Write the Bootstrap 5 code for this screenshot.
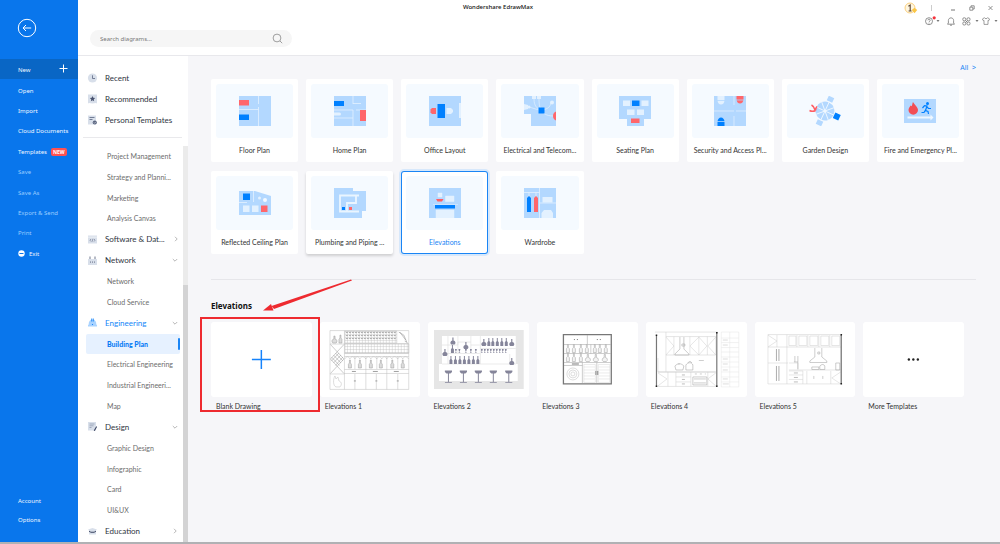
<!DOCTYPE html>
<html lang="en">
<head>
<meta charset="utf-8">
<meta name="viewport" content="width=device-width, initial-scale=1">
<title>Wondershare EdrawMax</title>
<link href="https://cdn.jsdelivr.net/npm/bootstrap@5.3.0/dist/css/bootstrap.min.css" rel="stylesheet">
<style>
  body { font: 7px/10px Lato, "Open Sans", sans-serif; color: #333; background: #f6f6f9; }
  a { color: inherit; text-decoration: none; }
  svg { display: block; flex: none; }
  .app { min-height: 100vh; border-bottom: 2px solid #b0b1b4; }
  .workspace { min-width: 0; }
  button.plain { border: 0; background: none; padding: 0; color: inherit; line-height: 0; }

  /* blue file menu */
  .filemenu { width: 78px; background: #0976ec; color: #f0f7ff; font-family: "Noto Sans", sans-serif; font-size: 6px; }
  .back-area { height: 59px; padding: 18px 0 0 17px; }
  .file-items { height: 204px; }
  .file-items a { flex: 1; padding: 2px 10px 0 18px; }
  .file-items a.current { background: #0966c5; }
  .file-items a.dim { color: #9accff; }
  .tag-new { background: #ff5152; color: #fff; font-size: 5px; line-height: 8px; font-weight: 700; border-radius: 2px; padding: 0 2px; margin-left: 4px; }
  .file-foot { gap: 9px; padding: 0 0 17px 18px; }

  /* title and search */
  .topbar { height: 56px; background: #fff; border-bottom: 1px solid #e8e8ec; }
  .titlebar { height: 15px; padding-right: 82px; }
  .apptitle { font: 500 6px/14px "Noto Sans", sans-serif; color: #111; }
  .winbtns { gap: 13px; right: 7px; top: 2px; color: #777; }
  .toolbtns { gap: 3px; right: 2px; top: 16px; color: #777; }
  .searchbox { width: 202px; height: 17px; margin: 15px 0 0 12px; background: #f6f6f6; border-radius: 9px; padding: 0 9px 0 10px; }
  .searchbox input { border: 0; background: none; outline: 0; padding: 0; font: 6px/10px "Noto Sans", sans-serif; min-width: 0; }
  .searchbox input::placeholder { color: #777; opacity: 1; }

  /* category panel */
  .cats { width: 110px; background: #fff; }
  .pinned { padding: 11px 0 7px 4px; margin: 0 6px 8px 5px; border-bottom: 1px solid #e9e9ec; }
  .cat { font-size: 8px; color: #303642; gap: 8px; }
  .pinned .cat { height: 21px; gap: 5px; }
  .catlist { min-width: 0; }
  .catlist .cat, .catlist .sub { flex: 1; padding-bottom: 1px; }
  .catlist .cat { padding-left: 10px; padding-right: 5px; }
  .catlist .cat.active { color: #1586f8; }
  .sub { color: #6c6c6c; padding-left: 29px; white-space: nowrap; }
  .sub.selected { background: #e6f1ff; color: #0a7cf5; font-weight: 900; border-radius: 2px; margin: 0 3px 0 8px; padding-left: 21px; }
  .sub.selected::after { content: ""; width: 2px; height: 12px; background: #1a85f5; margin-left: auto; border-radius: 1px; }
  .scroll-track { width: 5px; background: #ebebeb; }
  .scroll-thumb { height: 65%; background: #d3d3d4; }

  /* template browser */
  .browser { padding: 7px 36px 0 23px; min-width: 0; }
  .all-link { color: #1a85f5; margin-right: -12px; height: 10px; font-family: "Noto Sans", sans-serif; }
  .kinds { display: grid; grid-template-columns: repeat(8, minmax(0, 1fr)); gap: 9px 8px; margin-top: 6px; }
  .kind { background: #fff; border-radius: 2px; padding: 5px; text-align: center; height: 83px; }
  .kind .art { height: 54px; background: #f5faff; border-radius: 3px; margin-bottom: 7px; }
  .kind.raised { box-shadow: 0 2px 3px rgba(0,0,0,.16); }
  .kind.chosen { box-shadow: inset 0 0 0 1px #1a85f5, 0 0 0 2px #d7e8fb; color: #1a85f5; border-radius: 3px; }
  .rule { border-top: 1px solid #e6e6ea; margin: 25px -12px 0 0; padding: 21px 12px 0 0; }
  .rule h2 { font: 700 8px/10px "Noto Sans", sans-serif; color: #111; margin: 0 0 11px; }
  .sheets { display: grid; grid-template-columns: repeat(7, minmax(0, 1fr)); gap: 8px; }
  .sheet svg.page { width: 100%; height: 75px; background: #fff; border-radius: 3px; }
  .sheet span { display: block; margin-top: 4px; padding-left: 5px; }
  .frame-mark { left: -11px; top: -5px; right: -8px; bottom: -1px; border: 2px solid #ee2a30; z-index: 2; pointer-events: none; }
  .arrow-mark { left: 52px; top: -43px; z-index: 2; pointer-events: none; }
</style>
</head>
<body>
<svg width="0" height="0" class="position-absolute" aria-hidden="true">
  <defs>
    <pattern id="slats" width="3" height="3" patternUnits="userSpaceOnUse"><path d="M0 .5H3M.5 0V3" stroke="#bbb" stroke-width=".4"/></pattern>
    <symbol id="right" viewBox="0 0 6 6"><path d="M2 .8 4.200 3 2 5.200" fill="none" stroke="#999" stroke-width=".7"/></symbol>
    <symbol id="down" viewBox="0 0 6 6"><path d="M.8 2 3 4.200 5.200 2" fill="none" stroke="#999" stroke-width=".7"/></symbol>
    <symbol id="caret" viewBox="0 0 4 4"><path d="M.5 1h3L2 3z" fill="#777"/></symbol>
    <g id="bottle"><path d="M-.5-8h1v3l1 1.200V0h-3v-3.800l1-1.200z"/></g>
    <g id="flask"><path d="M-.6-7h1.200v3a2.200 2.200 0 0 1 1 4h-3.200a2.200 2.200 0 0 1 1-4z"/></g>
    <g id="glass"><path d="M-1-4h2l-.5 2-.3.200V-.5H.8V0H-.8V-.5h.6V-1.800l-.3-.2z"/></g>
    <g id="stool"><path d="M-3.600-1h7.200v1.500L2 2H.5v8.500H3.500v.8H-3.500v-.8H-.5V2H-2l-1.600-1.500z"/></g>
  </defs>
</svg>

<div class="app d-flex">
  <nav class="filemenu d-flex flex-column flex-shrink-0" aria-label="File">
    <div class="back-area"><button class="plain" aria-label="Back"><svg width="20" height="20" viewBox="0 0 20 20" fill="none" stroke="#fff"><circle cx="10" cy="10" r="8.700"/><path d="M14.200 10H6M9 7l-3 3 3 3"/></svg></button></div>
    <div class="file-items d-flex flex-column">
      <a href="#" class="current d-flex align-items-center justify-content-between">New<svg width="9" height="9" viewBox="0 0 9 9" stroke="#fff" class="mb-1"><path d="M4.500 .5v8M.5 4.500h8"/></svg></a>
      <a href="#" class="d-flex align-items-center">Open</a>
      <a href="#" class="d-flex align-items-center">Import</a>
      <a href="#" class="d-flex align-items-center text-nowrap">Cloud Documents</a>
      <a href="#" class="d-flex align-items-center">Templates<span class="tag-new">NEW</span></a>
      <a href="#" class="dim d-flex align-items-center">Save</a>
      <a href="#" class="dim d-flex align-items-center">Save As</a>
      <a href="#" class="dim d-flex align-items-center">Export &amp; Send</a>
      <a href="#" class="dim d-flex align-items-center">Print</a>
      <a href="#" class="d-flex align-items-center"><svg width="7" height="7" viewBox="0 0 7 7" class="me-1"><circle cx="3.500" cy="3.500" r="3.200" fill="#fff"/><path d="M1.500 3.500h4" stroke="#0976ec"/></svg>Exit</a>
    </div>
    <div class="file-foot d-flex flex-column mt-auto"><a href="#">Account</a><a href="#">Options</a></div>
  </nav>

  <div class="workspace flex-fill d-flex flex-column">
    <header class="topbar position-relative">
      <div class="titlebar text-center"><span class="apptitle">Wondershare EdrawMax</span></div>
      <div class="winbtns position-absolute d-flex align-items-center">
        <svg width="14" height="12" viewBox="0 0 14 12"><circle cx="6" cy="6" r="5" fill="#fff6df" stroke="#f7c566" stroke-width=".8"/><path d="M4.400 4.200 6.200 3v6M4.600 9h3" fill="none" stroke="#5c4632" stroke-width="1.100"/><path d="M7.800 8 10.500 5.800 13.200 8 10.500 11.200z" fill="#fbc646"/></svg>
        <svg width="2" height="8" viewBox="0 0 2 8" class="me-1"><path d="M.5 1v6" stroke="#ccc"/></svg>
        <button class="plain" aria-label="Minimize"><svg width="6" height="6" viewBox="0 0 6 6"><path d="M1 5h4" stroke="currentColor"/></svg></button>
        <button class="plain" aria-label="Restore"><svg width="6" height="6" viewBox="0 0 6 6" fill="none" stroke="currentColor" stroke-width=".8"><path d="M.8 2.200h3v3h-3zM2 2V.8h3.200V4H4"/></svg></button>
        <button class="plain" aria-label="Close"><svg width="5" height="6" viewBox="0 0 5 6" stroke="currentColor" stroke-width=".8"><path d="M.5 1 4.500 5M4.500 1 .5 5"/></svg></button>
      </div>
      <div class="toolbtns position-absolute d-flex align-items-center">
        <button class="plain d-flex align-items-center" aria-label="Help"><svg width="11" height="10" viewBox="0 0 11 10" fill="none" stroke="currentColor" stroke-width=".8"><circle cx="4" cy="5.200" r="3.500"/><path d="M2.900 4.300c0-1.500 2.300-1.500 2.300 0 0 .9-1.200.9-1.200 1.900M4 6.800v.8"/><circle cx="9.200" cy="1.800" r="1.600" fill="#f5333c" stroke="none"/></svg><svg width="4" height="4"><use href="#caret"/></svg></button>
        <button class="plain mx-1" aria-label="Notifications"><svg width="8" height="9" viewBox="0 0 8 9" fill="none" stroke="currentColor" stroke-width=".8"><path d="M.5 7.200h7L6.600 6V3.500C6.600 0 1.400 0 1.400 3.500V6zM3 8.200h2"/></svg></button>
        <button class="plain d-flex align-items-center" aria-label="Apps"><svg width="9" height="9" viewBox="0 0 9 9" fill="none" stroke="currentColor" stroke-width=".8"><rect x=".8" y=".8" width="3" height="3" rx="1.200"/><rect x="5" y=".8" width="3" height="3" rx="1.200"/><rect x=".8" y="5" width="3" height="3" rx="1.200"/><rect x="5" y="5" width="3" height="3" rx="1.200"/><path d="M3.500 3.500l2 2M5.500 3.500l-2 2"/></svg><svg width="4" height="4" class="ms-1"><use href="#caret"/></svg></button>
        <button class="plain d-flex align-items-center" aria-label="Themes"><svg width="8" height="8" viewBox="0 0 8 8" fill="none" stroke="currentColor" stroke-width=".7"><path d="M2.500.7.4 2l.9 1.700.7-.3v4h4v-4l.7.3L7.600 2 5.500.7C5.200 2 2.800 2 2.500.7z"/></svg><svg width="4" height="4" class="ms-1"><use href="#caret"/></svg></button>
      </div>
      <div class="searchbox d-flex align-items-center">
        <input type="text" class="flex-fill" placeholder="Search diagrams..." aria-label="Search diagrams">
        <svg width="11" height="11" viewBox="0 0 11 11" fill="none" stroke="#888" stroke-width=".8"><circle cx="5" cy="5" r="3.900"/><path d="M8 8l2.200 2.200"/></svg>
      </div>
    </header>

    <div class="d-flex flex-fill">
      <aside class="cats d-flex flex-column flex-shrink-0">
        <div class="pinned">
          <a href="#" class="cat d-flex align-items-center text-nowrap"><svg width="13" height="10" viewBox="0 0 13 10"><circle cx="5.500" cy="5" r="4.600" fill="#d8dfea"/><path d="M5.500 2.300V5.500H8" fill="none" stroke="#5a6580" stroke-width=".8"/></svg>Recent</a>
          <a href="#" class="cat d-flex align-items-center text-nowrap"><svg width="13" height="10" viewBox="0 0 13 10"><path d="M1 .5h9v9L9 9l-3.500.5L2 9l-1 .5z" fill="#d8dfea"/><path d="m5.500 2 .8 1.700 1.900.3-1.400 1.300.3 1.900-1.600-.9-1.600.9.300-1.900L2.800 4l1.900-.3z" fill="#4a5470"/></svg>Recommended</a>
          <a href="#" class="cat d-flex align-items-center text-nowrap"><svg width="13" height="10" viewBox="0 0 13 10"><path d="M1 .5h8v9H1z" fill="#d8dfea"/><path d="M2.500 2.500h5M2.500 4.500h3" stroke="#5a6580" stroke-width=".8"/><circle cx="7.800" cy="7.500" r="2.100" fill="#5a6580"/><path d="m6.800 7.500.8.8 1.300-1.500" fill="none" stroke="#fff" stroke-width=".5"/></svg>Personal Templates</a>
        </div>
        <div class="d-flex flex-fill">
          <div class="catlist d-flex flex-column flex-fill">
            <a href="#" class="sub d-flex align-items-center">Project Management</a>
            <a href="#" class="sub d-flex align-items-center">Strategy and Planni...</a>
            <a href="#" class="sub d-flex align-items-center">Marketing</a>
            <a href="#" class="sub d-flex align-items-center">Analysis Canvas</a>
            <a href="#" class="cat d-flex align-items-center text-nowrap"><svg width="9" height="9" viewBox="0 0 9 9"><path d="M0 .5h9v8H0z" fill="#d8dfea"/><path d="M0 2.200h9" stroke="#fff" stroke-width=".5"/><path d="m3 4-1 1.200L3 6.500M6 4l1 1.200L6 6.500M4.900 3.800 4.100 6.700" fill="none" stroke="#4a5470" stroke-width=".5"/></svg><span class="flex-fill">Software &amp; Dat...</span><svg width="6" height="6"><use href="#right"/></svg></a>
            <a href="#" class="cat d-flex align-items-center text-nowrap"><svg width="9" height="9" viewBox="0 0 9 9"><path d="M0 3h9v6H0z" fill="#d8dfea"/><path d="M2 3V.5M7 3V.5" stroke="#4a5470" stroke-width=".8"/><path d="M2.500 5.500v1.200M4.500 5.500v1.200M6.500 5.500v1.200" stroke="#4a5470" stroke-width=".7"/></svg><span class="flex-fill">Network</span><svg width="6" height="6"><use href="#down"/></svg></a>
            <a href="#" class="sub d-flex align-items-center">Network</a>
            <a href="#" class="sub d-flex align-items-center">Cloud Service</a>
            <a href="#" class="cat active d-flex align-items-center text-nowrap"><svg width="9" height="9" viewBox="0 0 9 9"><path d="M0 8.500V7l.7-.5C.5 3.500 2 1.500 4.500 1.500S8.500 3.500 8.300 6.500L9 7v1.500z" fill="#a9d3ff"/><path d="M3.700.5v3M5.300.5v3" stroke="#0a7cf5" stroke-width=".8"/><circle cx="4.500" cy="6.500" r=".6" fill="#0a7cf5"/></svg><span class="flex-fill">Engineering</span><svg width="6" height="6"><use href="#down"/></svg></a>
            <a href="#" class="sub selected d-flex align-items-center" aria-current="page">Building Plan</a>
            <a href="#" class="sub d-flex align-items-center">Electrical Engineering</a>
            <a href="#" class="sub d-flex align-items-center">Industrial Engineeri...</a>
            <a href="#" class="sub d-flex align-items-center">Map</a>
            <a href="#" class="cat d-flex align-items-center text-nowrap"><svg width="9" height="9" viewBox="0 0 9 9"><path d="M0 0h8v8.500H0z" fill="#d8dfea"/><path d="M1.500 2h5M1.500 3.800h4M1.500 5.500h2" stroke="#7a86a0" stroke-width=".6"/><path d="M6.200 8.800 8.700 4.500" stroke="#3a4460" stroke-width="1.100"/></svg><span class="flex-fill">Design</span><svg width="6" height="6"><use href="#down"/></svg></a>
            <a href="#" class="sub d-flex align-items-center">Graphic Design</a>
            <a href="#" class="sub d-flex align-items-center">Infographic</a>
            <a href="#" class="sub d-flex align-items-center">Card</a>
            <a href="#" class="sub d-flex align-items-center">UI&amp;UX</a>
            <a href="#" class="cat d-flex align-items-center text-nowrap"><svg width="9" height="9" viewBox="0 0 9 9"><path d="M0 2.500 4.500 1 9 2.500 8 3.500V7.500H1V3.500z" fill="#d8dfea"/><path d="M1 3.800l1.800 1h3.400L8 3.800v1L6 5.800H3L1 4.800z" fill="#3a4460"/></svg><span class="flex-fill">Education</span><svg width="6" height="6"><use href="#right"/></svg></a>
          </div>
          <div class="scroll-track d-flex flex-column justify-content-end"><div class="scroll-thumb"></div></div>
        </div>
      </aside>

      <main class="browser flex-fill">
        <div class="d-flex justify-content-end"><a href="#" class="all-link">All&nbsp; &gt;</a></div>
        <div class="kinds">
          <a href="#" class="kind"><div class="art d-flex align-items-center justify-content-center"><svg width="32" height="30" viewBox="0 0 32 30"><path fill="#b3d8ff" d="M0 0h32v30H0z"/><path d="M19.500 0v8M19.500 11v19M0 13.500h19.500" stroke="#e3f1ff" stroke-width=".8"/><path fill="#ff666b" d="M0 4h10v5.500H0z"/><path fill="#0080ff" d="M0 18.500h10V24H0z"/></svg></div><div class="text-nowrap">Floor Plan</div></a>
          <a href="#" class="kind"><div class="art d-flex align-items-center justify-content-center"><svg width="32" height="30" viewBox="0 0 32 30"><path fill="#b3d8ff" d="M0 0h32v30H0z"/><path d="M19 0v8M19 14v16M0 14h19M0 22h19M19 7.500h8M22 14h10" stroke="#e3f1ff" stroke-width=".8"/><path d="M0 16.500h5.500a1.500 1.500 0 0 1 0 3H0z" fill="#e3f1ff"/><path fill="#0080ff" d="M0 5h10v5H0z"/><path fill="#ff666b" d="M26 14h6v11h-6z"/></svg></div><div class="text-nowrap">Home Plan</div></a>
          <a href="#" class="kind"><div class="art d-flex align-items-center justify-content-center"><svg width="32" height="30" viewBox="0 0 32 30"><path fill="#b3d8ff" d="M0 0h32v30H0z"/><path fill="#0080ff" d="M8.500 8H16v14H8.500z"/><path fill="#ff666b" d="M3 12h4v6H3l-1.500-1.500v-3z"/><path fill="#e3f1ff" d="M17.500 12h4.500l2 2v2l-2 2h-4.500zM32 7h-2v15h2z"/></svg></div><div class="text-nowrap">Office Layout</div></a>
          <a href="#" class="kind"><div class="art d-flex align-items-center justify-content-center"><svg width="32" height="30" viewBox="0 0 32 30"><path fill="#b3d8ff" d="M0 0h32v30H7V18H0z"/><path d="M10 3c0 7 3 9 6 11M15 3c0 6 1 9 2 11M5 11l10 3M18 14c6-1 8-3 9-7M18 15c2 4 7 5 12 5" fill="none" stroke="#e3f1ff" stroke-width=".7"/><path d="M8 0h4v3H8zM13 0h4v3h-4zM0 8l4 1v4l-4 1z" fill="#e3f1ff"/><circle cx="5" cy="11" r="1.500" fill="#e3f1ff"/><circle cx="28" cy="6.500" r="2" fill="#e3f1ff"/><path fill="#0080ff" d="M14.500 11.500h6v6h-6z"/><path fill="#ff666b" d="M32 15.500v9c-4-1-4-8 0-9"/></svg></div><div class="text-nowrap">Electrical and Telecom...</div></a>
          <a href="#" class="kind"><div class="art d-flex align-items-center justify-content-center"><svg width="32" height="30" viewBox="0 0 32 30"><path fill="#b3d8ff" d="M0 0h32v23h-7v7H8v-7H0z"/><path d="M4 4.500h7V10H4zM22.500 4.500h7V10h-7zM8 13.500h7.500V19H8zM18 13.500h7V19h-7z" fill="#e3f1ff"/><path fill="#0080ff" d="M13 4.500h7.500V10H13z"/><path fill="#ff666b" d="M12 22.500h8.500V27H12z"/></svg></div><div class="text-nowrap">Seating Plan</div></a>
          <a href="#" class="kind"><div class="art d-flex align-items-center justify-content-center"><svg width="32" height="30" viewBox="0 0 32 30"><path fill="#b3d8ff" d="M0 0h32v30H0z"/><path d="M20 0v9M20 20v10M0 15h20M22 15h10" stroke="#dfefff" stroke-width=".8"/><path d="M3.500 0h7v4c0 6-7 6-7 0z" fill="#e3f1ff"/><path d="M22.500 0h7v3c0 6-7 6-7 0z" fill="#ff666b"/><path d="M3.500 30v-4c0-6 7-6 7 0v4z" fill="#0080ff"/><path d="M3 4.500h8M22 4h8M3 25.500h8" stroke="#b3d8ff" stroke-width=".8"/></svg></div><div class="text-nowrap">Security and Access Pl...</div></a>
          <a href="#" class="kind"><div class="art d-flex align-items-center justify-content-center"><svg width="32" height="30" viewBox="0 0 32 30"><g transform="rotate(25 16 15)"><circle cx="16" cy="15" r="9.500" fill="#b3d8ff"/><path d="M13-.5h6v5h-6zM13 25.500h6v5h-6z" fill="#b3d8ff"/><path d="M6 15h20M16 5v20M9 8l14 14M23 8 9 22" stroke="#f5faff" stroke-width=".8"/><path fill="#0080ff" d="M26 12h6v6h-6z"/></g><path d="M2.500 9c2 1 3 3 3.500 5M.5 14.500c2 1 4 1 6 0M8 10.500c-1 1-1.500 2-1.500 4" fill="none" stroke="#ff5d63" stroke-width="1.600"/></svg></div><div class="text-nowrap">Garden Design</div></a>
          <a href="#" class="kind"><div class="art d-flex align-items-center justify-content-center"><svg width="32" height="30" viewBox="0 0 32 30"><path fill="#b3d8ff" d="M0 3h32v24H0z"/><path d="M9 6c1.500 3 5 5 5 8a4.700 4.700 0 0 1-9.500 0c0-2 1.500-3 2-4.500l1 .8C8.500 9 8.200 7.500 9 6z" fill="#f24e55"/><path d="M3.500 20.500h23v-2l3 3-3 3v-2h-23z" fill="#eff7ff"/><circle cx="23.500" cy="7.500" r="1.500" fill="#0080ff"/><path d="M18.500 12l2-2.300 2.500.3-1.500 4.500 2.500 1 .5 2.500M21.500 14l-1.500 2.500H17.500M23 11l1.500 1.500h2.500" fill="none" stroke="#0080ff" stroke-width="1.200"/></svg></div><div class="text-nowrap">Fire and Emergency Pl...</div></a>
          <a href="#" class="kind"><div class="art d-flex align-items-center justify-content-center"><svg width="32" height="30" viewBox="0 0 32 30"><path fill="#b3d8ff" d="M0 3h16l16 5v19H0z"/><path d="M14.500 3v11M0 14.500h8" stroke="#e3f1ff" stroke-width=".8"/><path fill="#0080ff" d="M4 5.500h7V12H4z"/><path d="M4 17.500h6.500V24H4zM13 17.500h6.500V24H13z" fill="#e3f1ff"/><path fill="#ff666b" d="M22 17.500h6.500V24H22z"/><circle cx="20.500" cy="10" r="1.500" fill="#e3f1ff"/><circle cx="26" cy="12" r="2" fill="#f5faff"/></svg></div><div class="text-nowrap">Reflected Ceiling Plan</div></a>
          <a href="#" class="kind raised"><div class="art d-flex align-items-center justify-content-center"><svg width="32" height="30" viewBox="0 0 32 30"><path fill="#b3d8ff" d="M0 0h19v3h13v20h-4v7H0z"/><path d="M25 7.500H6v16h19M22 8v7h-9v8" fill="none" stroke="#eaf5ff" stroke-width="1.800"/><path fill="#0080ff" d="M8 19h3v3H8z"/><path fill="#ff666b" d="M15 19h3v3h-3z"/></svg></div><div class="text-nowrap">Plumbing and Piping ...</div></a>
          <a href="#" class="kind chosen"><div class="art d-flex align-items-center justify-content-center"><svg width="32" height="30" viewBox="0 0 32 30"><path fill="#b3d8ff" d="M0 0h32v30H0z"/><path d="M4 16.500h25M9 5h4v4H9zM16.500 8H25v5.500h-8.500zM7 22h18v8H7z" fill="#e3f1ff" stroke="#e3f1ff" stroke-width=".5"/><path fill="#ff5d63" d="M7 11h7.500l-1.500 2.500H8.500z"/><path fill="#0080ff" d="M6 17h20v3.500H6z"/></svg></div><div class="text-nowrap">Elevations</div></a>
          <a href="#" class="kind"><div class="art d-flex align-items-center justify-content-center"><svg width="32" height="30" viewBox="0 0 32 30"><path fill="#b3d8ff" d="M0 0h32v30H0z"/><path d="M0 4.500h15.500M15.500 0v30M15.500 15H32M5 4.500v4M12 4.500v4" stroke="#e3f1ff" stroke-width=".8"/><path d="M18.500 9h10v5.500h-10zM20 22h7l2 3v5H17.500v-5z" fill="#e3f1ff"/><path d="M3 24V10l2-2 2 2v14z" fill="#0080ff"/><path d="M10 24V10l2-2 2 2v14z" fill="#ff666b"/></svg></div><div class="text-nowrap">Wardrobe</div></a>
        </div>

        <section class="rule">
          <h2>Elevations</h2>
          <div class="sheets">
            <a href="#" class="sheet position-relative">
              <svg class="page" viewBox="0 0 101 75" fill="none"><path d="M50.500 28v19M41 37.500h19" stroke="#1683fb" stroke-width="1.500"/></svg>
              <span>Blank Drawing</span>
              <div class="frame-mark position-absolute"></div>
              <svg class="arrow-mark position-absolute" width="90" height="34" viewBox="0 0 90 34" aria-hidden="true"><path d="M88 .5 89 1.500 11 30 8.500 27z" fill="#ee2a30"/><path d="M0 31.500 8 25l2.500 6.500z" fill="#ee2a30"/></svg>
            </a>
            <a href="#" class="sheet">
              <svg class="page" viewBox="0 0 101 75" fill="none" stroke="#bbb" stroke-width=".5">
                <path d="M10 8.500h79v59H10zM24.500 8.500v59M10 22h14.500M24.500 31.500H89M24.500 21.500H89M24.500 34.500H89M24.500 47.500H89M24.500 51.500H89M10 52h14.500M46 34v33.500M67 34v33.500M35 34v13M57 34v13M78 34v13M35 52v15.500M56.500 52v15.500M78 52v15.500"/>
                <path fill="url(#slats)" d="M25 9h52v12H25zM25 22h64v9H25z"/>
                <path d="M26 10.500h50M26 13.500h50M26 16.500h50" stroke="#aaa" stroke-width="1" stroke-dasharray="2 1"/>
                <path d="M79 10l5 3 3 7M80 10l6 8M85 19l3 2" stroke="#888"/>
                <path d="M10.500 22.500 24 37 10.500 51.500M24 22.500 10.500 37 24 51.500M13.500 33l7.500 8M11.500 35l8 8.500M15.500 31l7.500 8M21 33l-7.500 8M19 31l-7.500 8M23 35l-7.500 8.500" stroke="#999"/>
                <path d="M25 37c1-3 4-3 5 0 1-3 4-3 5 0 1-3 4-3 5 0 1-3 4-3 6 0 1-3 4-3 5 0 1-3 4-3 6 0 1-3 4-3 5 0 1-3 4-3 5 0 1-3 4-3 5 0 1-3 4-3 6 0 1-3 4-3 5 0 1-3 4-3 6 0"/>
                <g fill="#ddd" stroke="#999"><use href="#bottle" x="20.500" y="21"/><use href="#flask" x="14.500" y="21"/><use href="#bottle" x="30" y="46"/><use href="#bottle" x="40" y="46"/><use href="#bottle" x="51" y="46"/><use href="#bottle" x="61" y="46"/><use href="#bottle" x="72.500" y="46"/><use href="#bottle" x="83" y="46"/></g>
                <path d="M32 49.500h4M53 49.500h5M74 49.500h5M34 59h2M55.500 59h2M77 59h2" stroke="#888" stroke-width=".8"/><path d="M15 54c-2 3-2 10 1 11h4c2-2 2-5-1-6l-1-4-2 2z"/>
              </svg><span>Elevations 1</span></a>
            <a href="#" class="sheet">
              <svg class="page" viewBox="0 0 101 75">
                <path fill="#e6e6e6" d="M6 8h90v59H6z"/><path fill="#fff" d="M14 14h74v28H14zM11 42h79v17H11z"/>
                <path d="M14 31.500h38M14 23h16v-9M30 20h13M43 14v17M52.500 14v28M52.500 26.500H88M30 20v11M20 14v28M43 23h9M82 32v10M14 42h74" fill="none" stroke="#ddd" stroke-width=".6"/>
                <g fill="#85859a"><use href="#flask" x="25" y="22.500"/><use href="#flask" x="38" y="27"/><use href="#flask" x="17" y="34"/><use href="#flask" x="56" y="24"/><use href="#flask" x="84" y="24"/><use href="#flask" x="84" y="43"/>
                <use href="#bottle" x="61" y="24"/><use href="#bottle" x="65" y="24"/><use href="#bottle" x="69.500" y="24"/><use href="#bottle" x="74" y="24"/><use href="#bottle" x="78.500" y="24"/><use href="#bottle" x="24.500" y="31"/>
                <use href="#bottle" x="23" y="42"/><use href="#bottle" x="27.500" y="42"/><use href="#bottle" x="32" y="42"/><use href="#bottle" x="36.500" y="42"/><use href="#bottle" x="41" y="42"/><use href="#bottle" x="45.500" y="42"/><use href="#bottle" x="50" y="42"/>
                <use href="#glass" x="28" y="31"/><use href="#glass" x="31.500" y="31"/><use href="#glass" x="38" y="31"/><use href="#glass" x="43" y="31"/><use href="#glass" x="48" y="31"/><use href="#glass" x="54" y="31"/><use href="#glass" x="57" y="31"/><use href="#glass" x="60" y="31"/><use href="#glass" x="63" y="31"/><use href="#glass" x="66" y="31"/><use href="#glass" x="69" y="31"/><use href="#glass" x="72" y="31"/><use href="#glass" x="75" y="31"/><use href="#glass" x="78" y="31"/>
                <use href="#stool" x="20.500" y="49.500"/><use href="#stool" x="35.500" y="49.500"/><use href="#stool" x="50.500" y="49.500"/><use href="#stool" x="65.500" y="49.500"/><use href="#stool" x="81" y="49.500"/></g>
              </svg><span>Elevations 2</span></a>
            <a href="#" class="sheet">
              <svg class="page" viewBox="0 0 101 75" fill="none" stroke="#999" stroke-width=".5">
                <path d="M26.500 12.500h48v49.500h-48z" stroke="#777" stroke-width="1.300"/><path d="M27 22.500h47M27 31.500h47M27 40.500h47M50.500 13v9M45.500 40.500V62M60 40.500V62M54 22.500v9M27 43.500h18.500"/>
                <g fill="#f3f3f3"><use href="#bottle" x="31" y="30.500"/><use href="#bottle" x="37" y="30.500"/><use href="#bottle" x="44" y="30.500"/><use href="#bottle" x="50" y="30.500"/><use href="#bottle" x="58" y="30.500"/><use href="#bottle" x="63" y="30.500"/><use href="#bottle" x="69" y="30.500"/><use href="#bottle" x="31" y="39.500"/><use href="#bottle" x="37" y="39.500"/><use href="#bottle" x="44" y="39.500"/><use href="#flask" x="51" y="39.500"/><use href="#flask" x="59" y="39.500"/><use href="#flask" x="68" y="39.500"/></g>
                <circle cx="36" cy="52" r="6" stroke="#bbb"/><circle cx="36" cy="52" r="4" stroke="#bbb"/><circle cx="36" cy="52" r="2" stroke="#bbb"/>
                <path d="M37 17.500h1M40 17.500h1M60 17.500h1M63 17.500h1M59 49v4M61 49v4M35 42h7" stroke="#777" stroke-width="1"/><path d="M47 42.500h11.500v18H47zM61.500 42.500H73v18H61.500zM47 45h11M47 48h11M47 51h11M47 54h11M47 57h11M62 45h11M62 48h11M62 51h11M62 54h11M62 57h11" stroke="#ccc" stroke-width=".4"/>
              </svg><span>Elevations 3</span></a>
            <a href="#" class="sheet">
              <svg class="page" viewBox="0 0 101 75" fill="none" stroke="#ccc" stroke-width=".5">
                <path d="M9 10h63M20 14.500h50M20 10v40M20 33h50v-18.500M28 14.500V33M53 14.500V33M61.500 14.500V33M44 14.500V33M20 15l8 9-8 9M53 15l-9 9 9 9M53 15l8 9-8 9M70 15l-8 9 8 9M12 50.500h58M12 49.500h58M22 50v14.500M30 50v14.500M45 50v14.500M62 50v14.500M30 55h15M30 60h15M12 51l9 6-9 7M70 51l-8 6 8 7M9 64.500h63M12 36v14"/>
                <path d="M34 15v12l-5 5v1h14v-1l-5-5V15M36 22h3v2h-3z" stroke="#999"/>
                <path d="M29 44c3-3 6-3 9 0l-1 4h-7zM32 42h2M40 43c2-3 6-3 7 0v5h-7zM42 41c1-2 3-2 4 0M53 38.500h5M47 55h14v8H47zM48 57h12M48 61h12M49 52h2M54 52h2M59 52h1" stroke="#999"/>
                <path d="M36 53h3M36 57.500h3M36 62h3" stroke="#777"/><path d="M10.500 13v51M71 10v54" stroke="#777" stroke-width="1.200"/><path d="M10.500 12.500v1.500M71 10v1.500M10.500 63.500V65M71 63.500V65" stroke="#222" stroke-width="1.500"/>
                <path d="M75.500 10h17.500v55H75.500zM84 10v55M75.500 16H93M75.500 20.500H93M75.500 25.500H93M75.500 30H93M75.500 35H93M75.500 40H93M75.500 45H93M75.500 50H93M75.500 55H93M75.500 60H93" stroke="#e4e4e4"/><path d="M77 18h5M77 23h5M77 37h5M77 42h5M77 48h5M77 57h5M77 62h6" stroke="#bbb"/>
              </svg><span>Elevations 4</span></a>
            <a href="#" class="sheet">
              <svg class="page" viewBox="0 0 101 75" fill="none" stroke="#ccc" stroke-width=".5">
                <path d="M13 12.500h75M13 25h74M13 12.500v49.500h75M22 13v12M32 12.500v49.500M42 13v12M53 13v12M64 13v12M75 13v12M13 41h20M13 13l9 6-9 6M34 14h7v9.500h-7zM44 14h8v9.500h-8zM55 14h8v9.500h-8zM66 14h8v9.500h-8zM77 14h8v9.500h-8zM34 48h52M34 41h9v7M34 49h14v13M34 53h14M34 57.500h14M52 49v13M76 49v13M86 50l-9 6 9 6"/>
                <path d="M21.500 27v12M24 27v12M21.500 44v15M24 44v15" stroke="#999" stroke-width=".8"/>
                <path d="M60 26v9l-5 4v1.500h17V39l-5-4v-9M63 30h2v2h-2zM57 45h7v2.500h-7zM65 44c2-2 4-2 5 0v3.500h-5zM81 41h4v7h-4zM40 34v6M43 34v6M39 40h4v7M59 54v3M68 54v3" stroke="#999"/><path d="M39 51h4M39 55.500h4M39 60h4" stroke="#777"/><path d="M86.500 13v49" stroke="#888" stroke-width="1.500"/><path d="M86.500 12v1.500M86.500 61v1.500" stroke="#222" stroke-width="1.500"/>
              </svg><span>Elevations 5</span></a>
            <a href="#" class="sheet">
              <svg class="page" viewBox="0 0 101 75" fill="#222"><circle cx="46" cy="37.500" r="1.200"/><circle cx="50.500" cy="37.500" r="1.200"/><circle cx="55" cy="37.500" r="1.200"/></svg><span>More Templates</span></a>
          </div>
        </section>
      </main>
    </div>
  </div>
</div>
<script src="https://cdn.jsdelivr.net/npm/bootstrap@5.3.0/dist/js/bootstrap.bundle.min.js"></script>
</body>
</html>
